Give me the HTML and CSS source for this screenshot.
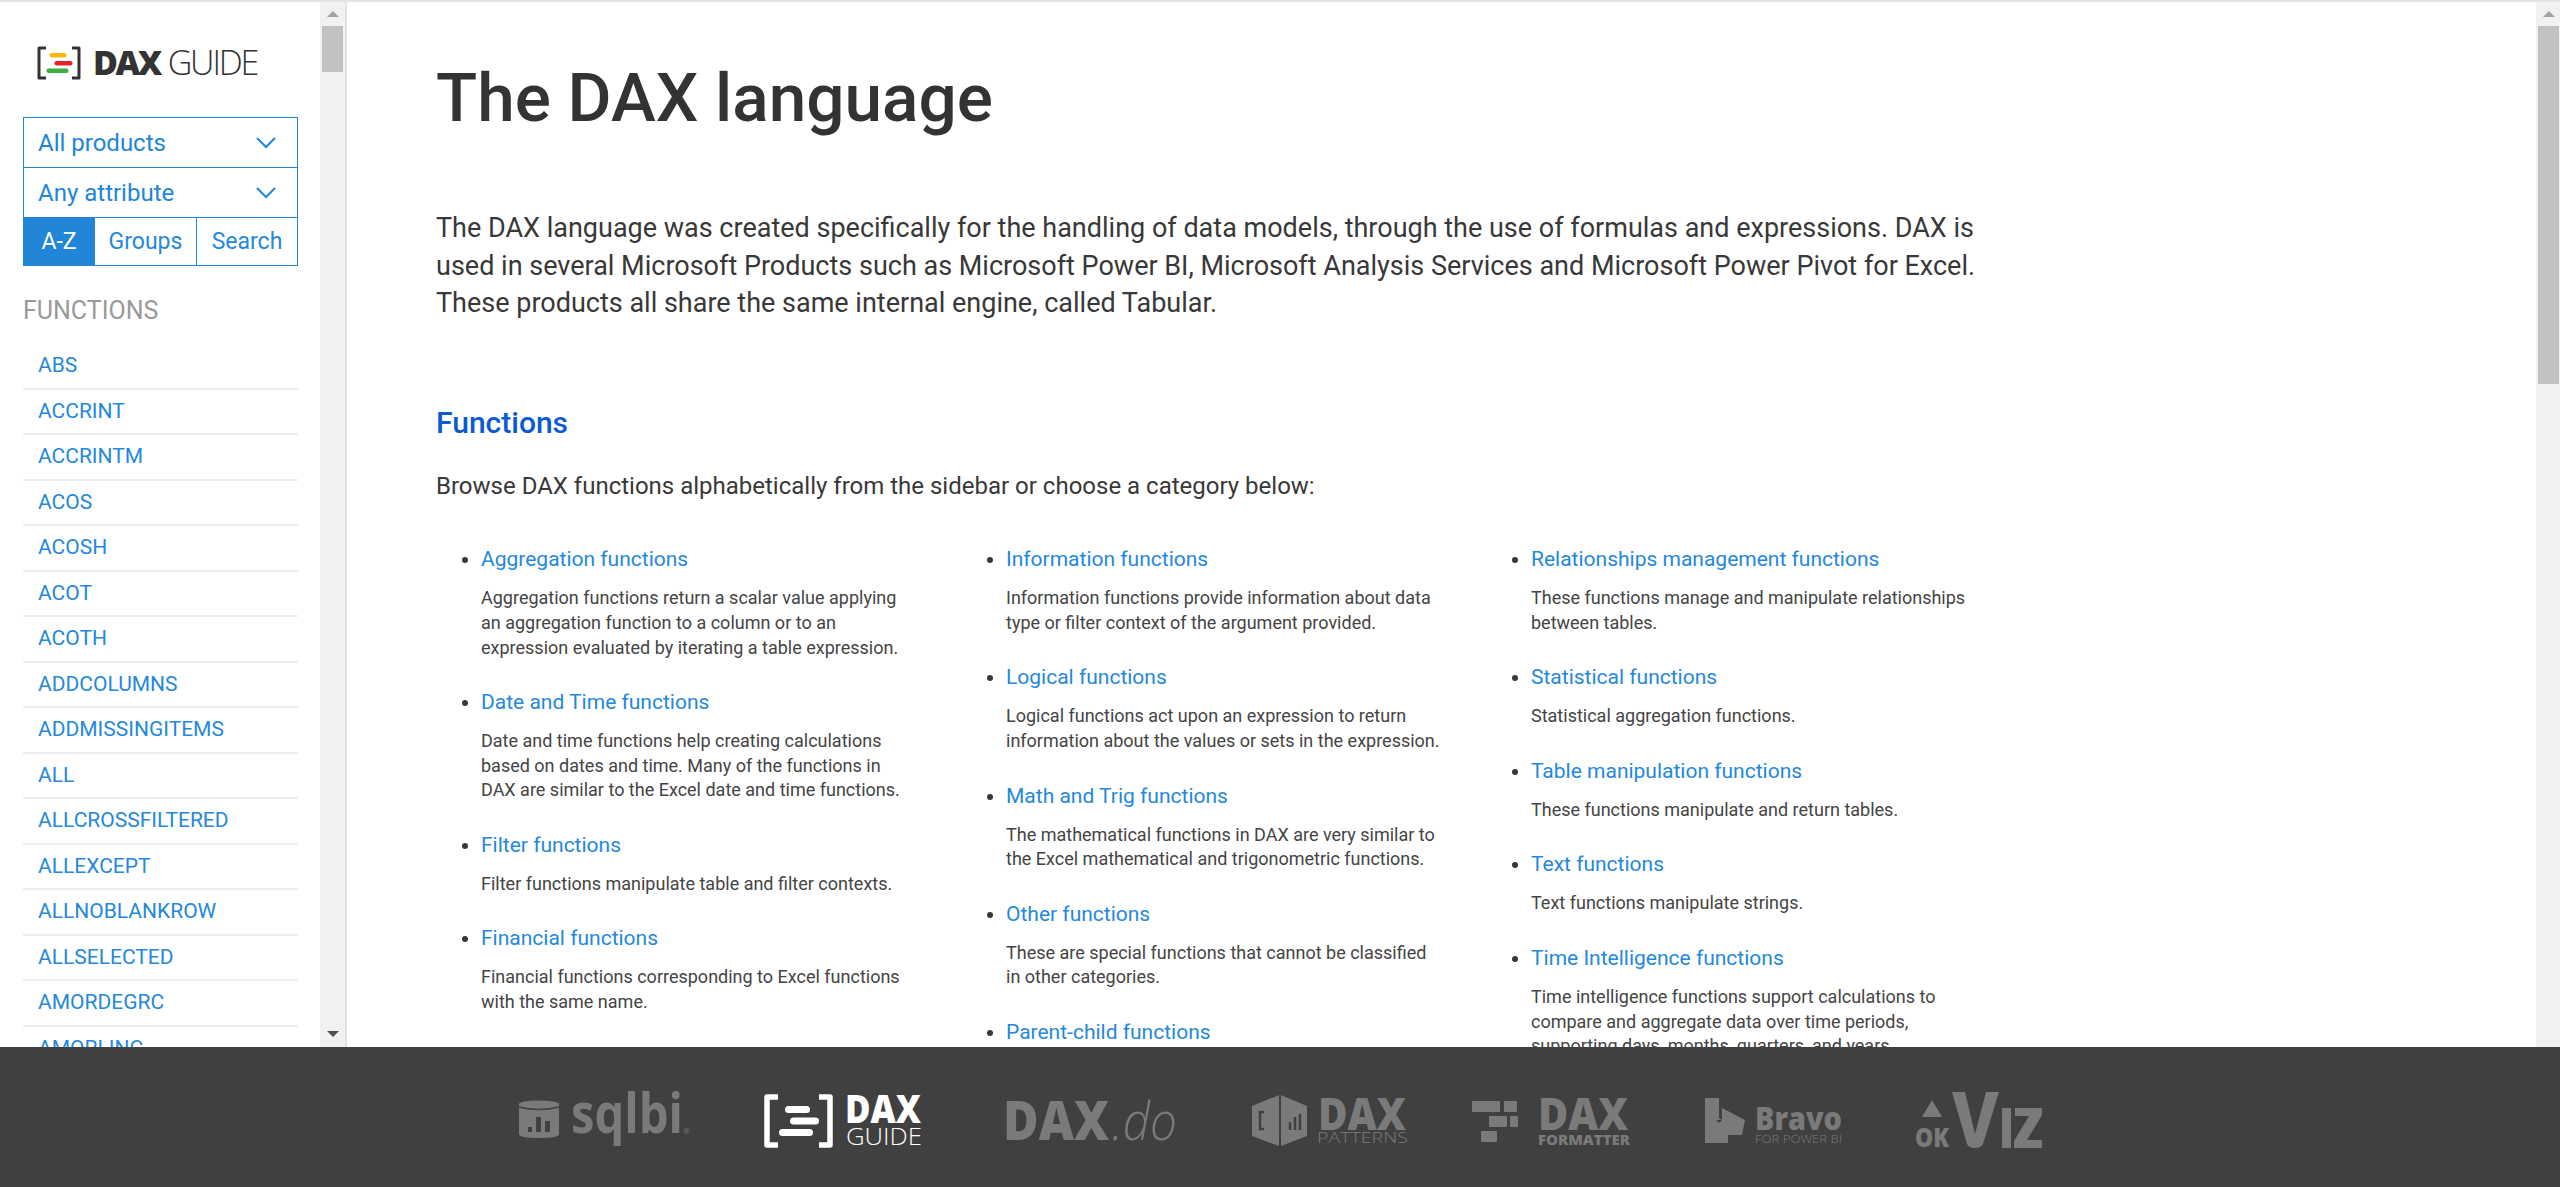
FILE: index.html
```html
<!DOCTYPE html>
<html lang="en">
<head>
  <meta charset="UTF-8" />
  <meta name="viewport" content="width=device-width, initial-scale=1.0"/>
  <title>The DAX language - DAX Guide</title>
  <link rel="stylesheet" href="styles.css">
</head>
<body>
  <div class="panes">
    <aside class="sidebar">
      <div class="sidebar-inner">
        <a class="brand" href="#">
          <svg class="brand-mark" viewBox="0 0 44 34" width="44" height="34">
            <path d="M9 2H2v30h7M35 2h7v30h-7" fill="none" stroke="#333" stroke-width="3" stroke-linejoin="round"/>
            <rect x="12.500" y="7" width="17" height="4.500" rx="2.200" fill="#f9b90f"/>
            <rect x="17.500" y="15" width="18" height="4.500" rx="2.200" fill="#e8202a"/>
            <rect x="9.500" y="22.500" width="22" height="4.500" rx="2.200" fill="#3eaf3f"/>
          </svg>
          <span class="brand-dax">DAX</span><span class="brand-guide">GUIDE</span>
        </a>

        <div class="filters">
          <div class="filter-select">All products
            <svg viewBox="0 0 20 12" width="20" height="12"><path d="M1 1l9 9 9-9" fill="none" stroke="#2185d8" stroke-width="2"/></svg>
          </div>
          <div class="filter-select">Any attribute
            <svg viewBox="0 0 20 12" width="20" height="12"><path d="M1 1l9 9 9-9" fill="none" stroke="#2185d8" stroke-width="2"/></svg>
          </div>
          <div class="filter-tabs">
            <a class="tab tab-az active" href="#">A-Z</a>
            <a class="tab tab-groups" href="#">Groups</a>
            <a class="tab tab-search" href="#">Search</a>
          </div>
        </div>

        <h4 class="side-title">FUNCTIONS</h4>
        <ul class="fn-list">
          <li><a href="#">ABS</a></li>
          <li><a href="#">ACCRINT</a></li>
          <li><a href="#">ACCRINTM</a></li>
          <li><a href="#">ACOS</a></li>
          <li><a href="#">ACOSH</a></li>
          <li><a href="#">ACOT</a></li>
          <li><a href="#">ACOTH</a></li>
          <li><a href="#">ADDCOLUMNS</a></li>
          <li><a href="#">ADDMISSINGITEMS</a></li>
          <li><a href="#">ALL</a></li>
          <li><a href="#">ALLCROSSFILTERED</a></li>
          <li><a href="#">ALLEXCEPT</a></li>
          <li><a href="#">ALLNOBLANKROW</a></li>
          <li><a href="#">ALLSELECTED</a></li>
          <li><a href="#">AMORDEGRC</a></li>
          <li><a href="#">AMORLINC</a></li>
        </ul>
      </div>
      <div class="scrollbar">
        <span class="arrow-up"></span>
        <span class="thumb thumb-side"></span>
        <span class="arrow-down"></span>
      </div>
    </aside>

    <main class="main">
      <div class="content">
        <h1>The DAX language</h1>
        <p class="intro">The DAX language was created specifically for the handling of data models, through the use of formulas and expressions. DAX is used in several Microsoft Products such as Microsoft Power BI, Microsoft Analysis Services and Microsoft Power Pivot for Excel. These products all share the same internal engine, called Tabular.</p>

        <h2>Functions</h2>
        <p class="browse">Browse DAX functions alphabetically from the sidebar or choose a category below:</p>

        <div class="categories">
          <ul>
            <li><a href="#">Aggregation functions</a><p>Aggregation functions return a scalar value applying an aggregation function to a column or to an expression evaluated by iterating a table expression.</p></li>
            <li><a href="#">Date and Time functions</a><p>Date and time functions help creating calculations based on dates and time. Many of the functions in DAX are similar to the Excel date and time functions.</p></li>
            <li><a href="#">Filter functions</a><p>Filter functions manipulate table and filter contexts.</p></li>
            <li><a href="#">Financial functions</a><p>Financial functions corresponding to Excel functions with the same name.</p></li>
          </ul>
          <ul>
            <li><a href="#">Information functions</a><p>Information functions provide information about data type or filter context of the argument provided.</p></li>
            <li><a href="#">Logical functions</a><p>Logical functions act upon an expression to return information about the values or sets in the expression.</p></li>
            <li><a href="#">Math and Trig functions</a><p>The mathematical functions in DAX are very similar to the Excel mathematical and trigonometric functions.</p></li>
            <li><a href="#">Other functions</a><p>These are special functions that cannot be classified in other categories.</p></li>
            <li><a href="#">Parent-child functions</a></li>
          </ul>
          <ul>
            <li><a href="#">Relationships management functions</a><p>These functions manage and manipulate relationships between tables.</p></li>
            <li><a href="#">Statistical functions</a><p>Statistical aggregation functions.</p></li>
            <li><a href="#">Table manipulation functions</a><p>These functions manipulate and return tables.</p></li>
            <li><a href="#">Text functions</a><p>Text functions manipulate strings.</p></li>
            <li><a href="#">Time Intelligence functions</a><p>Time intelligence functions support calculations to compare and aggregate data over time periods, supporting days, months, quarters, and years.</p></li>
          </ul>
        </div>
      </div>
      <div class="scrollbar scrollbar-page">
        <span class="arrow-up"></span>
        <span class="thumb thumb-page"></span>
      </div>
    </main>
  </div>

  <footer class="footer">
    <!-- sqlbi -->
    <svg class="logo" viewBox="0 0 173 62" width="173" height="62">
      <path d="M1 14h40v30q0 4-20 4t-20-4z"/>
      <ellipse cx="21" cy="14" rx="20" ry="3.500"/>
      <path d="M1 17q20 5 40 0" fill="none" stroke="#404040" stroke-width="1.500"/>
      <path d="M10 37h4v5h-4zM18 27h5v15h-5zM27 31h5v11h-5z" fill="#404040"/>
      <text class="lg-semi" x="53" y="43" font-size="55" textLength="112" lengthAdjust="spacingAndGlyphs">sqlbi</text>
      <text x="165" y="44" font-size="8">®</text>
    </svg>
    <!-- dax guide, the current site -->
    <svg class="logo logo-active" viewBox="0 0 170 62" width="170" height="62">
      <path d="M15 7H4v48h11M56 7h11v48H56" fill="none" stroke="#fff" stroke-width="5.500" stroke-linejoin="round"/>
      <rect x="22" y="16" width="25" height="7" rx="3.500"/>
      <rect x="27" y="27.500" width="29" height="7" rx="3.500"/>
      <rect x="16" y="39" width="34" height="7" rx="3.500"/>
      <text class="lg-bold" x="82" y="33" font-size="38" textLength="76" lengthAdjust="spacingAndGlyphs">DAX</text>
      <text class="lg-light" x="83" y="55" font-size="24" textLength="76" lengthAdjust="spacingAndGlyphs">GUIDE</text>
    </svg>
    <!-- dax.do -->
    <svg class="logo" viewBox="0 0 175 62" width="175" height="62">
      <text class="lg-bold" x="-2" y="50" font-size="54" textLength="106" lengthAdjust="spacingAndGlyphs">DAX</text>
      <text class="lg-italic" x="107" y="50" font-size="54" textLength="65" lengthAdjust="spacingAndGlyphs">.do</text>
    </svg>
    <!-- dax patterns -->
    <svg class="logo" viewBox="0 0 148 62" width="148" height="62">
      <path d="M27 5L0 16v30l27 10V5zM29 5l26 11v30L29 56z"/>
      <path d="M12 22H8v17h4M38 40v-8M43 40V27M48 40V24" fill="none" stroke="#404040" stroke-width="2.500"/>
      <text class="lg-bold" x="66" y="40" font-size="45" textLength="88" lengthAdjust="spacingAndGlyphs">DAX</text>
      <text class="lg-light" x="65" y="53" font-size="14" textLength="91" lengthAdjust="spacingAndGlyphs">PATTERNS</text>
    </svg>
    <!-- dax formatter -->
    <svg class="logo" viewBox="0 0 160 62" width="160" height="62">
      <rect x="0" y="11" width="28" height="11" rx="1"/>
      <rect x="32" y="11" width="13" height="11" rx="1"/>
      <rect x="17" y="26" width="18" height="11" rx="1"/>
      <rect x="38" y="26" width="8" height="11" rx="1"/>
      <rect x="9" y="41" width="16" height="11" rx="1"/>
      <text class="lg-bold" x="66" y="40" font-size="45" textLength="90" lengthAdjust="spacingAndGlyphs">DAX</text>
      <text class="lg-bold" x="66" y="55" font-size="14" textLength="92" lengthAdjust="spacingAndGlyphs">FORMATTER</text>
    </svg>
    <!-- bravo -->
    <svg class="logo" viewBox="0 0 139 62" width="139" height="62">
      <path d="M1 8h14v20l3 2V18l23 12-3 15H24v8H1z"/>
      <path d="M12 30h6l-3 3z" fill="#404040"/>
      <text class="lg-bold" x="51" y="40" font-size="32" textLength="87" lengthAdjust="spacingAndGlyphs">Bravo</text>
      <text class="lg-light" x="51" y="53" font-size="10" textLength="87" lengthAdjust="spacingAndGlyphs">FOR POWER BI</text>
    </svg>
    <!-- okviz -->
    <svg class="logo" viewBox="0 0 130 62" width="130" height="62">
      <path d="M17 10l10 17H7z"/>
      <text class="lg-bold" x="0" y="57" font-size="27" textLength="34" lengthAdjust="spacingAndGlyphs">OK</text>
      <path d="M37 2h13l10 42 11-42h13L68 54q-2 4-8 4t-8-4z"/>
      <rect x="87" y="18" width="9" height="40"/>
      <path d="M100 18h27v7l-15 25h15v8h-28v-7l15-25h-14z"/>
    </svg>
  </footer>
</body>
</html>
```

FILE: styles.css
```css
* {
  box-sizing: border-box;
}

html, body {
  height: 100%;
}

body {
  margin: 0;
  display: flex;
  flex-direction: column;
  overflow: hidden;
  background: #fff;
  color: #383838;
  font-family: Roboto, sans-serif;
}

a {
  color: #2488dc;
  text-decoration: none;
}

.panes {
  flex: 1;
  min-height: 0;
  display: flex;
  border-top: 2px solid #e4e4e4;
}

/* sidebar */
.sidebar {
  width: 347px;
  flex: none;
  display: flex;
  border-right: 2px solid #e2e2e2;
}

.sidebar-inner {
  width: 320px;
  flex: none;
  padding: 0 22px 0 23px;
  overflow: hidden;
}

.brand {
  display: flex;
  align-items: center;
  height: 34px;
  margin: 44px 0 37px 14px;
  font-family: "Open Sans", sans-serif;
  font-size: 34px;
  color: #333;
}

.brand-mark {
  margin: 0 12px 0 0;
}

.brand-dax {
  margin-top: -2px;
  font-weight: 800;
  letter-spacing: -2.500px;
}

.brand-guide {
  margin: -2px 0 0 8px;
  font-weight: 300;
  letter-spacing: -2.200px;
}

.filters {
  border: 1px solid #2185d8;
  color: #2185d8;
}

.filter-select {
  display: flex;
  justify-content: space-between;
  align-items: center;
  height: 50px;
  padding: 0 21px 0 14px;
  font-size: 24px;
  border-bottom: 1px solid #2185d8;
}

.filter-tabs {
  display: flex;
  height: 47px;
}

.tab {
  display: flex;
  align-items: center;
  justify-content: center;
  font-size: 23px;
}

.tab-az {
  width: 70px;
}

.tab-groups {
  width: 103px;
  border-left: 1px solid #2185d8;
  border-right: 1px solid #2185d8;
}

.tab-search {
  flex: 1;
}

.tab.active {
  background: #2185d8;
  color: #fff;
}

.side-title {
  margin: 32px 0 20px;
  font-size: 25px;
  line-height: 26px;
  font-weight: 400;
  color: #999;
}

.fn-list {
  list-style: none;
  margin: 0;
  padding: 0;
}

.fn-list li {
  height: 45.500px;
  padding-left: 15px;
  line-height: 43px;
  font-size: 21px;
  border-bottom: 2px solid #eee;
}

/* fake scrollbars, same look as the browser ones */
.scrollbar {
  width: 25px;
  flex: none;
  position: relative;
  background: #f1f1f1;
}

.scrollbar-page {
  width: 24px;
}

.thumb {
  display: block;
  position: absolute;
  left: 2px;
  width: 21px;
  top: 24px;
  background: #c1c1c1;
}

.thumb-side {
  height: 46px;
}

.thumb-page {
  height: 358px;
}

.arrow-up, .arrow-down {
  position: absolute;
  left: 7px;
  border-left: 6px solid transparent;
  border-right: 6px solid transparent;
}

.arrow-up {
  top: 9px;
  border-bottom: 6px solid #a3a3a3;
}

.arrow-down {
  bottom: 10px;
  border-top: 6px solid #505050;
}

/* main column */
.main {
  flex: 1;
  min-width: 0;
  display: flex;
  justify-content: space-between;
}

.content {
  width: 1575px;
  margin-left: 89px;
  overflow: hidden;
}

h1 {
  margin: 56px 0 0;
  font-size: 67.500px;
  line-height: 80px;
  font-weight: 500;
  color: #333;
}

.intro {
  max-width: 1550px;
  margin: 72px 0 0;
  font-size: 27px;
  line-height: 37.700px;
}

h2 {
  margin: 82px 0 0;
  font-size: 30px;
  line-height: 36px;
  font-weight: 500;
  color: #0a5bd3;
}

.browse {
  margin: 28px 0 0;
  font-size: 24px;
  line-height: 34px;
}

.categories {
  display: grid;
  grid-template-columns: repeat(3, 525px);
  margin-top: 41px;
}

.categories ul {
  margin: 0;
  padding: 0 44px 0 45px;
}

.categories li {
  margin-bottom: 26.800px;
  font-size: 21px;
}

.categories li a {
  display: block;
  line-height: 30px;
}

.categories li p {
  margin: 12px 0 0;
  font-size: 18px;
  line-height: 24.700px;
  color: #444;
}

/* footer logos */
.footer {
  flex: none;
  height: 140px;
  padding: 8px 0 0 3px;
  display: flex;
  justify-content: center;
  align-items: center;
  gap: 72px;
  background: #404040;
}

.logo {
  flex: none;
  fill: #7a7a7a;
  overflow: visible;
  font-family: "Open Sans", sans-serif;
}

.logo-active {
  fill: #fff;
}

.lg-bold {
  font-weight: 800;
}

.lg-semi {
  font-weight: 700;
}

.lg-light {
  font-weight: 300;
}

.lg-italic {
  font-weight: 300;
  font-style: italic;
}
```
